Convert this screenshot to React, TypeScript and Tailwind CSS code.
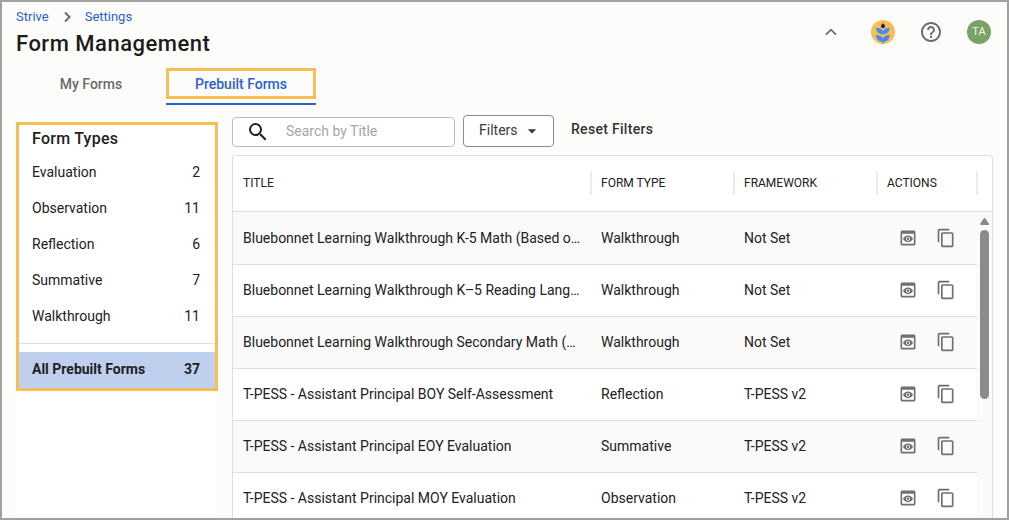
import {
  MdArrowDropDown,
  MdContentCopy,
  MdHelpOutline,
  MdPreview,
  MdSearch,
} from "react-icons/md";

type FormRow = {
  title: string;
  type: string;
  framework: string;
};

const FORM_TYPES = [
  { label: "Evaluation", count: 2 },
  { label: "Observation", count: 11 },
  { label: "Reflection", count: 6 },
  { label: "Summative", count: 7 },
  { label: "Walkthrough", count: 11 },
];

const ROWS: FormRow[] = [
  {
    title: "Bluebonnet Learning Walkthrough K-5 Math (Based o…",
    type: "Walkthrough",
    framework: "Not Set",
  },
  {
    title: "Bluebonnet Learning Walkthrough K–5 Reading Lang…",
    type: "Walkthrough",
    framework: "Not Set",
  },
  {
    title: "Bluebonnet Learning Walkthrough Secondary Math (…",
    type: "Walkthrough",
    framework: "Not Set",
  },
  {
    title: "T-PESS - Assistant Principal BOY Self-Assessment",
    type: "Reflection",
    framework: "T-PESS v2",
  },
  {
    title: "T-PESS - Assistant Principal EOY Evaluation",
    type: "Summative",
    framework: "T-PESS v2",
  },
  {
    title: "T-PESS - Assistant Principal MOY Evaluation",
    type: "Observation",
    framework: "T-PESS v2",
  },
];

const COLUMNS = "grid grid-cols-[358px_143px_143px_100px]";

function ChevronRight() {
  return (
    <svg width={20} height={20} viewBox="0 0 20 20" fill="none" className="mx-2" aria-hidden>
      <path d="M8 5.500l4.500 4.500L8 14.500" stroke="#6b6b6b" strokeWidth={2} />
    </svg>
  );
}

function ChevronUp() {
  return (
    <svg width={20} height={20} viewBox="0 0 20 20" fill="none" className="mr-[30px]" aria-hidden>
      <path d="M5 12.700l5-5 5 5" stroke="#6b6b6b" strokeWidth={1.8} />
    </svg>
  );
}

function PlantLogo() {
  return (
    <svg width={24} height={24} viewBox="0 0 24 24" aria-hidden>
      <circle cx={12} cy={12} r={12} fill="#f4bf56" />
      <path d="M12 3.300c1.300 1 2 1.900 2 2.900a2 2 0 0 1-4 0c0-1 .7-1.900 2-2.900z" fill="#2a2350" />
      <path
        d="M5 7.800c3 0 5.600.9 7 3.400 1.400-2.500 3.700-3.400 6.700-3.400-.1 3.800-2.500 6.500-6.700 6.500S5.100 11.600 5 7.800z"
        fill="#4a8af4"
      />
      <path
        d="M5 15.100c3 0 5.600.8 7 3.200 1.400-2.400 3.700-3.200 6.700-3.200-.1 3.800-2.200 6.600-6 6.800h-1.400c-3.900-.2-6.200-3-6.300-6.800z"
        fill="#4a8af4"
      />
      <path d="M11.400 21h1.200v3h-1.200z" fill="#4a8af4" />
    </svg>
  );
}

function Header() {
  return (
    <header className="flex h-[62px] justify-between pl-3.5 pr-4">
      <div>
        <nav className="flex h-[29px] items-center text-[13px] text-[#2962cc]" aria-label="Breadcrumb">
          <a className="pt-0.5">Strive</a>
          <ChevronRight />
          <a className="pt-0.5">Settings</a>
        </nav>
        <h1 className="text-[22px] font-medium leading-[25px] tracking-[0.5px] text-[#1c1c1c]">
          Form Management
        </h1>
      </div>
      <div className="flex h-[60px] items-center text-[#6b6b6b]">
        <ChevronUp />
        <PlantLogo />
        <MdHelpOutline size={24} className="ml-6 mr-6" />
        <div className="flex size-6 items-center justify-center rounded-full bg-[#7ba266] text-[11px] text-white/90">
          TA
        </div>
      </div>
    </header>
  );
}

function Tabs() {
  return (
    <div className="flex h-[39px] pl-3.5 text-sm font-medium">
      <button type="button" className="h-[39px] w-[150px] text-[#6b6b6b]">
        My Forms
      </button>
      <div className="flex h-[41px] w-[150px] flex-col justify-between border-b-2 border-[#2962cc] pb-1 pt-1">
        <button
          type="button"
          className="h-[31px] w-full border-[3px] border-[#f4bf56] text-[#2962cc]"
        >
          Prebuilt Forms
        </button>
      </div>
    </div>
  );
}

function Sidebar() {
  return (
    <aside className="h-full w-[200px] shrink-0 rounded-t bg-white pt-[9px]">
      <div className="h-[269px] w-[202px] border-[3px] border-[#f4bf56]">
        <h2 className="h-[29px] px-[13px] pt-0.5 text-base font-medium leading-6 tracking-[0.25px]">
          Form Types
        </h2>
        <ul>
          {FORM_TYPES.map((t) => (
            <li key={t.label} className="flex h-9 items-center justify-between pl-[13px] pr-[15px]">
              <span>{t.label}</span>
              <span>{t.count}</span>
            </li>
          ))}
        </ul>
        <div className="mt-[9px] h-px bg-[#dedede]" />
        <div className="mt-2 flex h-9 items-center justify-between bg-[#bfcfee] pb-0.5 pl-[13px] pr-[15px] font-bold">
          <span>All Prebuilt Forms</span>
          <span>37</span>
        </div>
      </div>
    </aside>
  );
}

function Toolbar() {
  return (
    <div className="flex items-end">
      <div className="flex h-[30px] w-[223px] items-center rounded border border-[#bdbdbd] bg-white pl-[13px]">
        <MdSearch size={24} className="mr-4" />
        <input
          className="w-40 bg-transparent pb-0.5 outline-none placeholder:text-[#a6a6a6]"
          placeholder="Search by Title"
        />
      </div>
      <button
        type="button"
        className="ml-2 flex h-8 w-[91px] items-center rounded border border-[#8c8c8c] bg-white pb-0.5 pl-[15px] text-[#3a3a3a]"
      >
        <span>Filters</span>
        <MdArrowDropDown size={20} className="ml-1 mt-0.5" />
      </button>
      <button type="button" className="mb-2 ml-[17px] font-medium tracking-[0.3px] text-[#333]">
        Reset Filters
      </button>
    </div>
  );
}

function HeadCell({ label }: { label: string }) {
  return (
    <div className="flex h-6 items-center border-r-2 border-[#ebebeb] pl-[9px]">{label}</div>
  );
}

function FormsTable() {
  return (
    <div className="mt-2 flex h-[363px] w-[761px] flex-col overflow-hidden rounded-t border border-b-0 border-[#dedede] bg-white">
      <div className="flex h-14 shrink-0 items-center border-b border-[#dedede] pb-px pl-px text-xs">
        <div className={COLUMNS}>
          <HeadCell label="TITLE" />
          <HeadCell label="FORM TYPE" />
          <HeadCell label="FRAMEWORK" />
          <HeadCell label="ACTIONS" />
        </div>
      </div>
      <div className="flex min-h-0 flex-1 bg-[#fafafa]">
        <div className="w-[744px] overflow-hidden pt-px">
          {ROWS.map((row) => (
            <div
              key={row.title}
              className={`${COLUMNS} h-[52px] items-center border-b border-[#dedede] bg-white pb-0.5 pl-px odd:bg-[#fafafa] [&>*]:pl-[9px]`}
            >
              <span className="whitespace-nowrap">{row.title}</span>
              <span>{row.type}</span>
              <span>{row.framework}</span>
              <span className="flex items-center text-[#6f6f6f]">
                <MdPreview size={20} className="ml-[11px]" />
                <MdContentCopy size={20} className="ml-[18px]" />
              </span>
            </div>
          ))}
        </div>
        <div className="flex flex-1 flex-col items-center pt-1.5">
          <svg width={9} height={7} viewBox="0 0 9 7" aria-hidden>
            <path
              d="M4.500 1 8 6H1z"
              fill="#8b8b8b"
              stroke="#8b8b8b"
              strokeLinejoin="round"
              strokeWidth={2}
            />
          </svg>
          <div className="mt-[5px] h-[169px] w-[9px] rounded-full bg-[#8b8b8b]" />
        </div>
      </div>
    </div>
  );
}

export default function App() {
  return (
    <div className="flex h-[520px] w-[1009px] flex-col overflow-hidden border-2 border-[#a0a0a0] bg-[#fcfcfa] font-[Roboto,sans-serif] text-sm text-[#212121]">
      <Header />
      <Tabs />
      <main className="flex min-h-0 flex-1 gap-4 pl-3.5 pt-2.5">
        <Sidebar />
        <section className="pt-0.5">
          <Toolbar />
          <FormsTable />
        </section>
      </main>
    </div>
  );
}
